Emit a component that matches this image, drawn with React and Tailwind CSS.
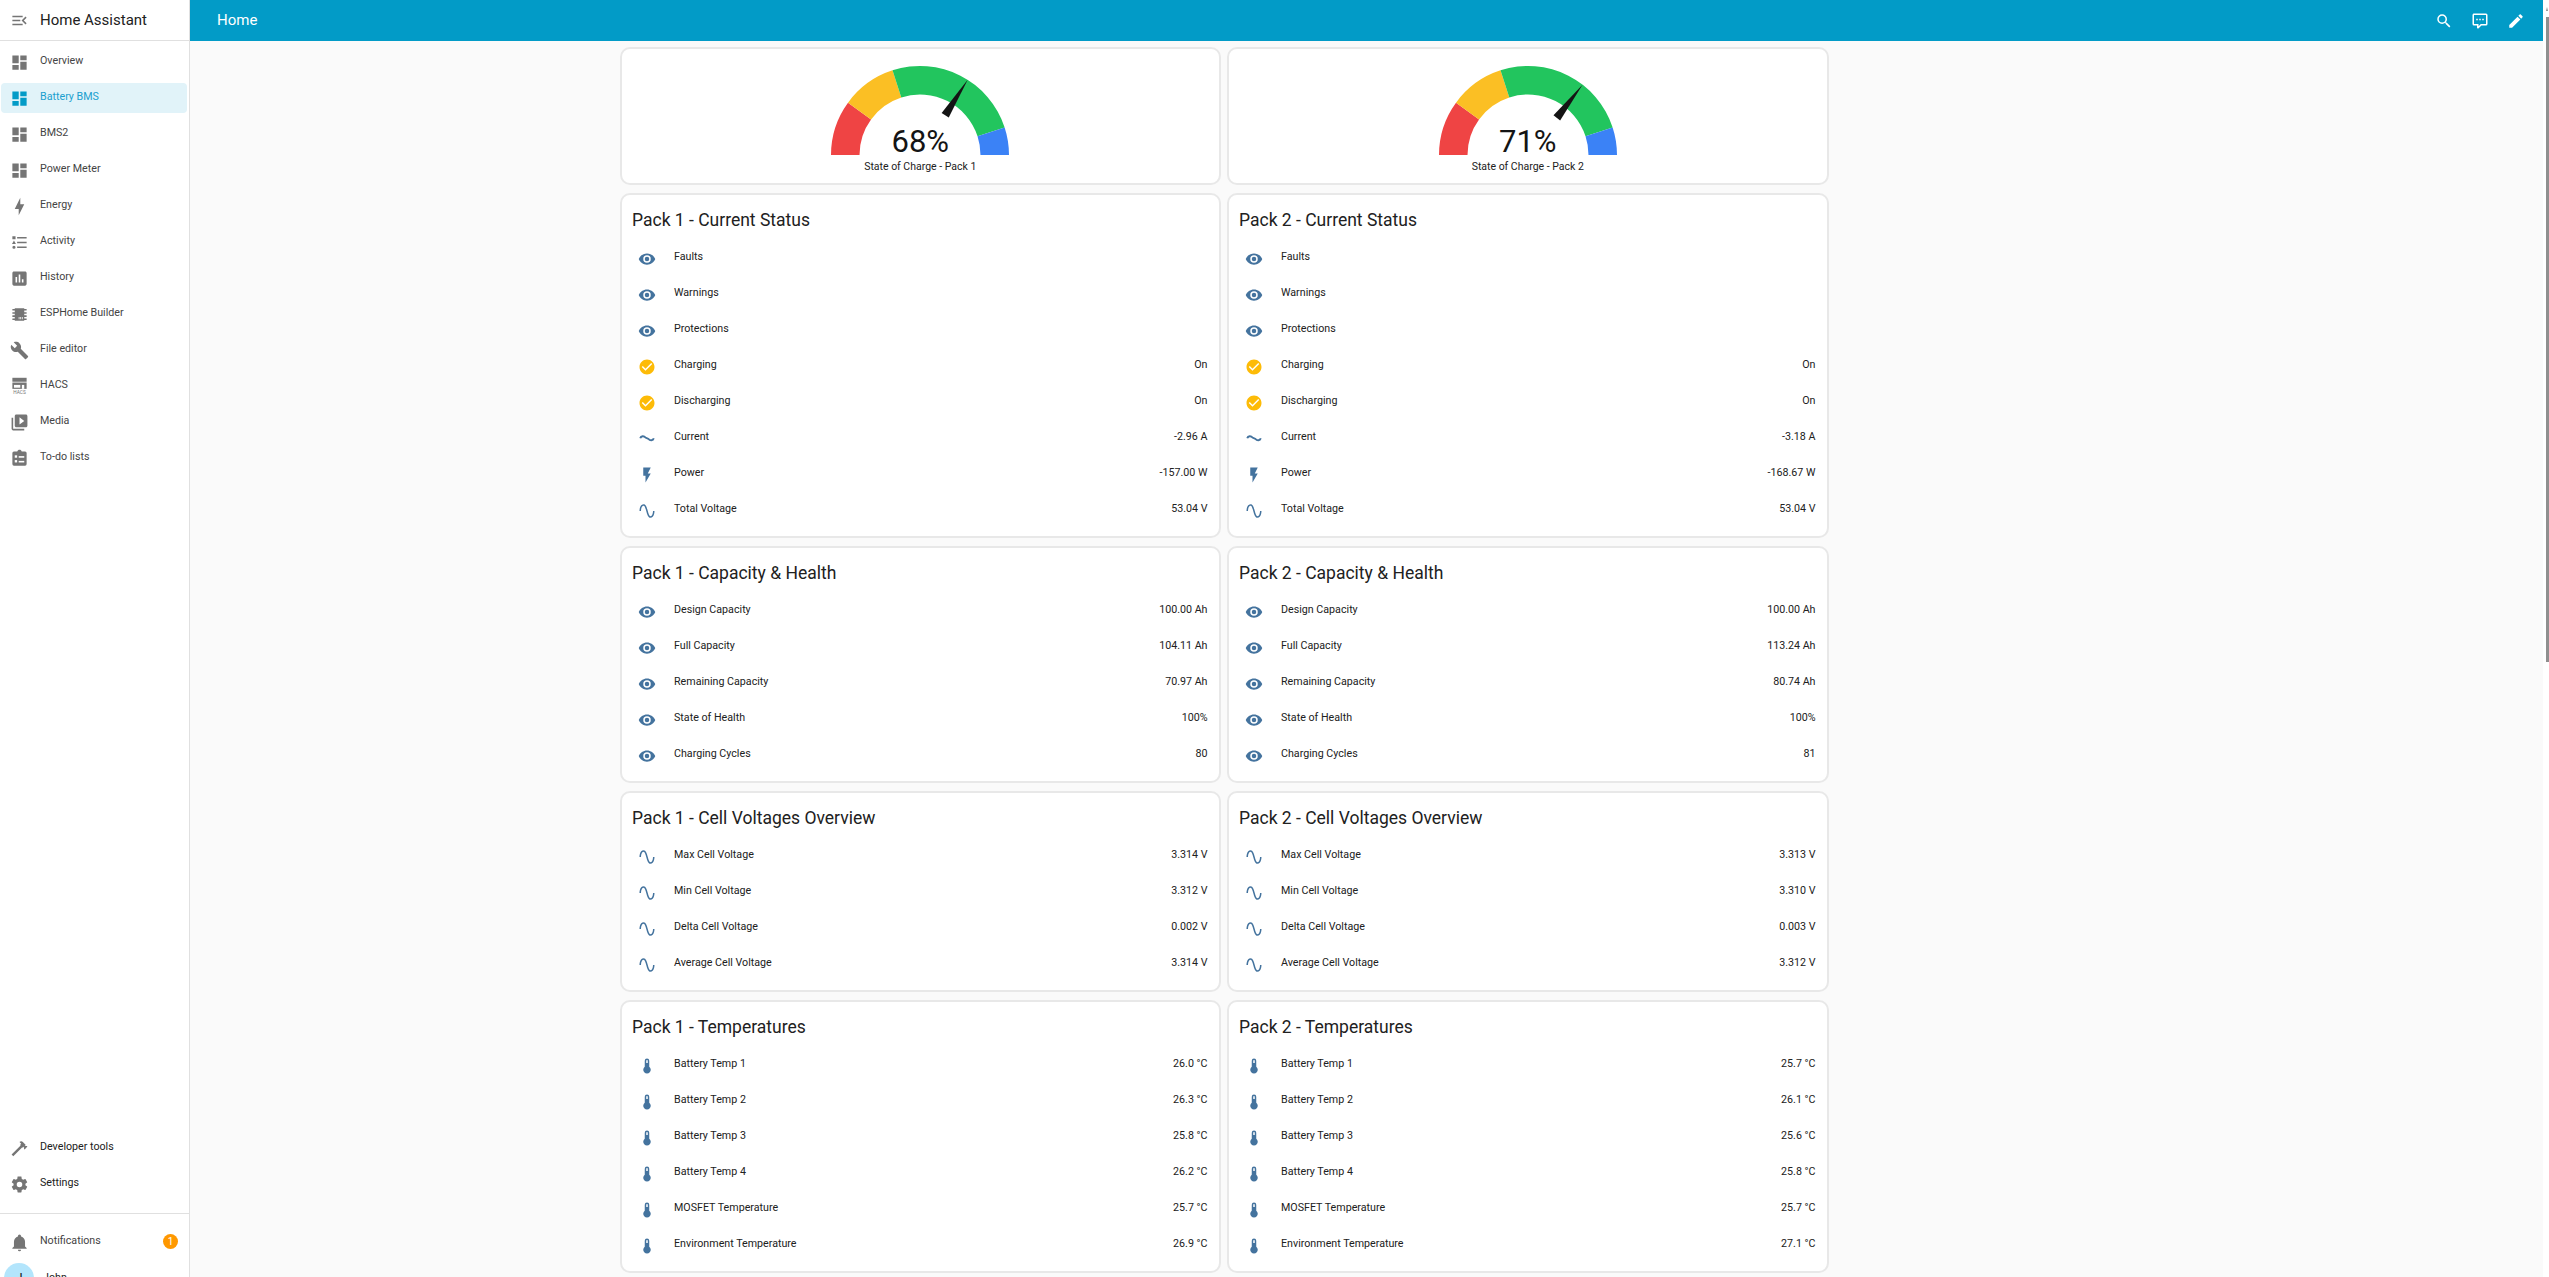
const P = {
  dashboard: 'M13,3V9H21V3M13,21H21V11H13M3,21H11V15H3M3,13H11V3H3V13Z',
  menuOpen: 'M21,15.61L19.59,17L14.58,12L19.59,7L21,8.39L17.44,12L21,15.61M3,6H16V8H3V6M3,13V11H13V13H3M3,18V16H16V18H3Z',
  bolt: 'M11 15H6L13 1V9H18L11 23V15Z',
  list: 'M5,9.5L7.5,14H2.5L5,9.5M3,4H7V8H3V4M5,20A2,2 0 0,0 7,18A2,2 0 0,0 5,16A2,2 0 0,0 3,18A2,2 0 0,0 5,20M9,5V7H21V5H9M9,19H21V17H9V19M9,13H21V11H9V13Z',
  chart: 'M19 3H5C3.9 3 3 3.9 3 5V19C3 20.1 3.9 21 5 21H19C20.1 21 21 20.1 21 19V5C21 3.9 20.1 3 19 3M9 17H7V10H9V17M13 17H11V7H13V17M17 17H15V13H17V17Z',
  chip: 'M6,4H18V5H21V7H18V9H21V11H18V13H21V15H18V17H21V19H18V20H6V19H3V17H6V15H3V13H6V11H3V9H6V7H3V5H6V4M11,15V18H12V15H11M13,15V18H14V15H13M15,15V18H16V15H15Z',
  wrench: 'M22.7,19L13.6,9.9C14.5,7.6 14,4.9 12.1,3C10.1,1 7.1,0.6 4.7,1.7L9,6L6,9L1.6,4.7C0.4,7.1 0.9,10.1 2.9,12.1C4.8,14 7.5,14.5 9.8,13.6L18.9,22.7C19.3,23.1 19.9,23.1 20.3,22.7L22.6,20.4C23.1,20 23.1,19.3 22.7,19Z',
  media: 'M4 6H2V20C2 21.1 2.9 22 4 22H18V20H4V6M20 2H8C6.9 2 6 2.9 6 4V16C6 17.1 6.9 18 8 18H20C21.1 18 22 17.1 22 16V4C22 2.9 21.1 2 20 2M12 14.5V5.5L18 10L12 14.5Z',
  hammer: 'M2 19.63L13.43 8.2L12.72 7.5L14.14 6.07L12 3.89C13.2 2.7 15.09 2.7 16.27 3.89L19.87 7.5L18.45 8.91H21.29L22 9.62L18.45 13.21L17.74 12.5V9.62L16.27 11.04L15.56 10.33L4.13 21.76L2 19.63Z',
  cog: 'M12,15.5A3.5,3.5 0 0,1 8.5,12A3.5,3.5 0 0,1 12,8.5A3.5,3.5 0 0,1 15.5,12A3.5,3.5 0 0,1 12,15.5M19.43,12.97C19.47,12.65 19.5,12.33 19.5,12C19.5,11.67 19.47,11.34 19.43,11L21.54,9.37C21.73,9.22 21.78,8.95 21.66,8.73L19.66,5.27C19.54,5.05 19.27,4.96 19.05,5.05L16.56,6.05C16.04,5.66 15.5,5.32 14.87,5.07L14.5,2.42C14.46,2.18 14.25,2 14,2H10C9.75,2 9.54,2.18 9.5,2.42L9.13,5.07C8.5,5.32 7.96,5.66 7.44,6.05L4.95,5.05C4.73,4.96 4.46,5.05 4.34,5.27L2.34,8.73C2.21,8.95 2.27,9.22 2.46,9.37L4.57,11C4.53,11.34 4.5,11.67 4.5,12C4.5,12.33 4.53,12.65 4.57,12.97L2.46,14.63C2.27,14.78 2.21,15.05 2.34,15.27L4.34,18.73C4.46,18.95 4.73,19.03 4.95,18.95L7.44,17.94C7.96,18.34 8.5,18.68 9.13,18.93L9.5,21.58C9.54,21.82 9.75,22 10,22H14C14.25,22 14.46,21.82 14.5,21.58L14.87,18.93C15.5,18.67 16.04,18.34 16.56,17.94L19.05,18.95C19.27,19.03 19.54,18.95 19.66,18.73L21.66,15.27C21.78,15.05 21.73,14.78 21.54,14.63L19.43,12.97Z',
  bell: 'M21,19V20H3V19L5,17V11C5,7.9 7.03,5.17 10,4.29C10,4.19 10,4.1 10,4A2,2 0 0,1 12,2A2,2 0 0,1 14,4C14,4.1 14,4.19 14,4.29C16.97,5.17 19,7.9 19,11V17L21,19M14,21A2,2 0 0,1 12,23A2,2 0 0,1 10,21',
  search: 'M9.5,3A6.5,6.5 0 0,1 16,9.5C16,11.11 15.41,12.59 14.44,13.73L14.71,14H15.5L20.5,19L19,20.5L14,15.5V14.71L13.73,14.44C12.59,15.41 11.11,16 9.5,16A6.5,6.5 0 0,1 3,9.5A6.5,6.5 0 0,1 9.5,3M9.5,5C7,5 5,7 5,9.5C5,12 7,14 9.5,14C12,14 14,12 14,9.5C14,7 12,5 9.5,5Z',
  comment: 'M9,22A1,1 0 0,1 8,21V18H4A2,2 0 0,1 2,16V4C2,2.89 2.9,2 4,2H20A2,2 0 0,1 22,4V16A2,2 0 0,1 20,18H13.9L10.2,21.71C10,21.9 9.75,22 9.5,22V22H9M10,16V19.08L13.08,16H20V4H4V16H10M17,11V9H15V11H17M13,11V9H11V11H13M9,11V9H7V11H9Z',
  pencil: 'M20.71,7.04C21.1,6.65 21.1,6 20.71,5.63L18.37,3.29C18,2.9 17.35,2.9 16.96,3.29L15.12,5.12L18.87,8.87M3,17.25V21H6.75L17.81,9.93L14.06,6.18L3,17.25Z',
  eye: 'M12,9A3,3 0 0,0 9,12A3,3 0 0,0 12,15A3,3 0 0,0 15,12A3,3 0 0,0 12,9M12,17A5,5 0 0,1 7,12A5,5 0 0,1 12,7A5,5 0 0,1 17,12A5,5 0 0,1 12,17M12,4.5C7,4.5 2.73,7.61 1,12C2.73,16.39 7,19.5 12,19.5C17,19.5 21.27,16.39 23,12C21.27,7.61 17,4.5 12,4.5Z',
  check: 'M12 2C6.5 2 2 6.5 2 12S6.5 22 12 22 22 17.5 22 12 17.5 2 12 2M10 17L5 12L6.41 10.59L10 14.17L17.59 6.58L19 8L10 17Z',
  flash: 'M7,2V13H10V22L17,10H13L17,2H7Z',
  sine: 'M16.5,21C13.5,21 12.31,16.76 11.05,12.28C10.14,9.04 9,5 7.5,5C4.11,5 4,11.93 4,12H2C2,11.63 2.06,3 7.5,3C10.5,3 11.71,7.25 12.97,11.74C13.91,15.08 15,19 16.5,19C19.94,19 20.03,12.07 20,12H22C22,12.37 21.94,21 16.5,21Z',
  thermo: 'M15 13V5A3 3 0 0 0 9 5V13A5 5 0 1 0 15 13M12 4A1 1 0 0 1 13 5V8H11V5A1 1 0 0 1 12 4Z',
  clipboard: 'M19,3H14.82C14.4,1.84 13.3,1 12,1C10.7,1 9.6,1.84 9.18,3H5A2,2 0 0,0 3,5V19A2,2 0 0,0 5,21H19A2,2 0 0,0 21,19V5A2,2 0 0,0 19,3Z',
};

const Icon = ({ d, className = '' }) => (
  <svg viewBox="0 0 24 24" className={`shrink-0 fill-current ${className}`}>
    <path d={d} />
  </svg>
);

// the current-ac glyph: a flattened wave, drawn as a stroke
const CurrentIcon = ({ className = '' }) => (
  <svg viewBox="0 0 24 24" className={`shrink-0 ${className}`} fill="none" stroke="currentColor" strokeWidth="2.6">
    <path d="M3 11C4 7.5 8 7.5 10 10L14 12C16 14.5 20 14.5 21 11" />
  </svg>
);

const HacsIcon = ({ className = '' }) => (
  <svg viewBox="0 0 24 24" className={`shrink-0 ${className}`} fill="currentColor">
    <rect x="3" y="1" width="18" height="5" />
    <rect x="3" y="7" width="18" height="8" />
    <rect x="5" y="10" width="8" height="3.5" fill="#ffffff" />
    <rect x="15" y="10" width="3" height="5" fill="#ffffff" />
    <text x="12" y="22" textAnchor="middle" fontSize="6" fontFamily="Roboto, sans-serif">HACS</text>
  </svg>
);

const TodoIcon = ({ className = '' }) => (
  <svg viewBox="0 0 24 24" className={`shrink-0 ${className}`} fill="currentColor">
    <path d={P.clipboard} />
    <rect x="6" y="8" width="3" height="3" fill="#ffffff" />
    <rect x="11" y="9" width="7" height="2" fill="#ffffff" />
    <rect x="6" y="14" width="3" height="3" fill="#ffffff" />
    <rect x="11" y="15" width="7" height="2" fill="#ffffff" />
  </svg>
);

const NAV = [
  { label: 'Overview', d: P.dashboard },
  { label: 'Battery BMS', d: P.dashboard, active: true },
  { label: 'BMS2', d: P.dashboard },
  { label: 'Power Meter', d: P.dashboard },
  { label: 'Energy', d: P.bolt },
  { label: 'Activity', d: P.list },
  { label: 'History', d: P.chart },
  { label: 'ESPHome Builder', d: P.chip },
  { label: 'File editor', d: P.wrench },
  { label: 'HACS', Custom: HacsIcon },
  { label: 'Media', d: P.media },
  { label: 'To-do lists', Custom: TodoIcon },
];

const NavRow = ({ label, d, Custom, active, dark }) => (
  <div className="h-[36px] pt-[4px] pl-px pr-[2px]">
    <div className={`h-[30px] flex items-center pl-[9px] gap-[11px] rounded-[4px] ${active ? 'bg-[#e1f3f9] text-[#1a9fcf]' : ''}`}>
      {Custom ? (
        <Custom className="w-[19px] h-[19px] text-[#757575]" />
      ) : (
        <Icon d={d} className={`w-[19px] h-[19px] ${active ? 'text-[#039bc7]' : 'text-[#757575]'}`} />
      )}
      <span className={`text-[10.7px] -mt-[1px] ${active ? '' : dark ? 'text-[#212121]' : 'text-[#444444]'}`}>{label}</span>
    </div>
  </div>
);

const Sidebar = () => (
  <aside className="w-[190px] shrink-0 h-full overflow-hidden bg-white border-r-[1.5px] border-[#e0e0e0]">
    <div className="h-[41px] border-b-[1.5px] border-[#e0e0e0] flex items-center pl-[10px] gap-[11px]">
      <Icon d={P.menuOpen} className="w-[19px] h-[19px] text-[#757575]" />
      <span className="text-[15px] text-[#212121]">Home Assistant</span>
    </div>
    <nav className="pt-[2px]">
      {NAV.map((item) => <NavRow key={item.label} {...item} />)}
    </nav>
    <div className="mt-[654px]">
      <NavRow label="Developer tools" d={P.hammer} dark />
      <NavRow label="Settings" d={P.cog} dark />
    </div>
    <div className="mt-[12px] border-t-[1.5px] border-[#e0e0e0] pt-[9px]">
      <div className="relative">
        <NavRow label="Notifications" d={P.bell} />
        <span className="absolute right-[11px] top-[11px] w-[15px] h-[15px] rounded-full bg-[#ff9800] text-white text-[10px] flex items-center justify-center">1</span>
      </div>
      <div className="flex items-center gap-[9px] pl-[4px] mt-[4px]">
        <span className="w-[30px] h-[30px] shrink-0 rounded-full bg-[#b3e5fc] text-[#212121] text-[13px] flex items-center justify-center">J</span>
        <span className="text-[10.7px] text-[#212121]">John</span>
      </div>
    </div>
  </aside>
);

const arc = (from, to, r1 = 89, r2 = 60.5) => {
  const pt = (pct, r) => {
    const a = Math.PI * (1 - pct / 100);
    return `${(r * Math.cos(a)).toFixed(2)} ${(-r * Math.sin(a)).toFixed(2)}`;
  };
  return `M${pt(from, r1)}A${r1} ${r1} 0 0 1 ${pt(to, r1)}L${pt(to, r2)}A${r2} ${r2} 0 0 0 ${pt(from, r2)}Z`;
};

const needle = (pct) => {
  const a = Math.PI * (1 - pct / 100);
  const ux = Math.cos(a), uy = -Math.sin(a);
  const nx = -uy, ny = ux;
  const f = (r, w) => `${(ux * r + nx * w).toFixed(2)} ${(uy * r + ny * w).toFixed(2)}`;
  return `M${f(89, 0)}L${f(47, 4.2)}L${f(47, -4.2)}Z`;
};

const Gauge = ({ value, pack }) => (
  <div className="bg-white border-2 border-[#e8e8e8] rounded-[10px] h-[138px] flex flex-col items-center pt-[16px]">
    <div className="relative w-[180px] h-[90px]">
      <svg viewBox="-90 -90 180 90" className="w-[180px] h-[90px] block">
        <path d={arc(0, 20)} fill="#ef4444" />
        <path d={arc(20, 40)} fill="#fbbf24" />
        <path d={arc(40, 90)} fill="#22c55e" />
        <path d={arc(90, 100)} fill="#3b82f6" />
        <path d={needle(value)} fill="#141414" />
      </svg>
      <span className="absolute inset-x-0 bottom-[-7px] text-center text-[31px] leading-[40px] text-[#141414]">{value}%</span>
    </div>
    <span className="text-[10.5px] leading-[14px] mt-[5px] text-[#212121]">State of Charge - Pack {pack}</span>
  </div>
);

const Row = ({ label, value, icon, on }) => (
  <div className="h-[36px] flex items-center">
    {icon === 'current' ? (
      <CurrentIcon className="ml-[6px] w-[18px] h-[18px] mt-[3px] text-[#44739e]" />
    ) : (
      <Icon d={icon} className={`ml-[6px] w-[18px] h-[18px] mt-[3px] ${on ? 'text-[#fdbb07]' : 'text-[#44739e]'}`} />
    )}
    <span className="ml-[18px] mt-[1px] text-[10.7px] text-[#212121]">{label}</span>
    <span className="ml-auto mt-[1px] text-[10.7px] text-[#212121]">{value}</span>
  </div>
);

const Card = ({ title, rows }) => (
  <div className="bg-white border-2 border-[#e8e8e8] rounded-[10px] pt-[13px] pb-[9px] pl-[10px] pr-[11px]">
    <h2 className="text-[17.5px] leading-[24px] mb-[7px] text-[#212121]">{title}</h2>
    {rows.map((r) => <Row key={r.label} {...r} />)}
  </div>
);

const status = (current, power, voltage) => [
  { label: 'Faults', value: '', icon: P.eye },
  { label: 'Warnings', value: '', icon: P.eye },
  { label: 'Protections', value: '', icon: P.eye },
  { label: 'Charging', value: 'On', icon: P.check, on: true },
  { label: 'Discharging', value: 'On', icon: P.check, on: true },
  { label: 'Current', value: current, icon: 'current' },
  { label: 'Power', value: power, icon: P.flash },
  { label: 'Total Voltage', value: voltage, icon: P.sine },
];

const withIcon = (icon, pairs) => pairs.map(([label, value]) => ({ label, value, icon }));

const PACKS = [
  {
    soc: 68,
    status: status('-2.96 A', '-157.00 W', '53.04 V'),
    capacity: [['Design Capacity', '100.00 Ah'], ['Full Capacity', '104.11 Ah'], ['Remaining Capacity', '70.97 Ah'], ['State of Health', '100%'], ['Charging Cycles', '80']],
    cells: [['Max Cell Voltage', '3.314 V'], ['Min Cell Voltage', '3.312 V'], ['Delta Cell Voltage', '0.002 V'], ['Average Cell Voltage', '3.314 V']],
    temps: [['Battery Temp 1', '26.0 °C'], ['Battery Temp 2', '26.3 °C'], ['Battery Temp 3', '25.8 °C'], ['Battery Temp 4', '26.2 °C'], ['MOSFET Temperature', '25.7 °C'], ['Environment Temperature', '26.9 °C']],
  },
  {
    soc: 71,
    status: status('-3.18 A', '-168.67 W', '53.04 V'),
    capacity: [['Design Capacity', '100.00 Ah'], ['Full Capacity', '113.24 Ah'], ['Remaining Capacity', '80.74 Ah'], ['State of Health', '100%'], ['Charging Cycles', '81']],
    cells: [['Max Cell Voltage', '3.313 V'], ['Min Cell Voltage', '3.310 V'], ['Delta Cell Voltage', '0.003 V'], ['Average Cell Voltage', '3.312 V']],
    temps: [['Battery Temp 1', '25.7 °C'], ['Battery Temp 2', '26.1 °C'], ['Battery Temp 3', '25.6 °C'], ['Battery Temp 4', '25.8 °C'], ['MOSFET Temperature', '25.7 °C'], ['Environment Temperature', '27.1 °C']],
  },
];

export default function App() {
  return (
    <div className="flex w-full h-screen overflow-hidden bg-white font-['Roboto',sans-serif]">
      <Sidebar />
      <main className="flex-1 min-w-0 h-full overflow-hidden bg-[#fafafa]">
        <header className="h-[41px] bg-[#029bc7] text-white flex items-center pl-[27px] pr-[18px]">
          <span className="text-[15px]">Home</span>
          <div className="ml-auto flex items-center gap-[18px]">
            <Icon d={P.search} className="w-[18px] h-[18px]" />
            <Icon d={P.comment} className="w-[18px] h-[18px]" />
            <Icon d={P.pencil} className="w-[18px] h-[18px]" />
          </div>
        </header>
        <div className="ml-[430px] mt-[6px] grid grid-cols-[600.5px_601.5px] gap-x-[6.5px] gap-y-[8px]">
          {PACKS.map((p, i) => <Gauge key={i} value={p.soc} pack={i + 1} />)}
          {PACKS.map((p, i) => <Card key={i} title={`Pack ${i + 1} - Current Status`} rows={p.status} />)}
          {PACKS.map((p, i) => <Card key={i} title={`Pack ${i + 1} - Capacity & Health`} rows={withIcon(P.eye, p.capacity)} />)}
          {PACKS.map((p, i) => <Card key={i} title={`Pack ${i + 1} - Cell Voltages Overview`} rows={withIcon(P.sine, p.cells)} />)}
          {PACKS.map((p, i) => <Card key={i} title={`Pack ${i + 1} - Temperatures`} rows={withIcon(P.thermo, p.temps)} />)}
        </div>
      </main>
      <div className="w-[6px] shrink-0 h-full bg-white pl-[3px]">
        <div className="mt-[7px] w-0 h-0 border-x-[1.5px] border-x-transparent border-b-[4px] border-b-[#8f8f8f]" />
        <div className="mt-[6px] h-[645px] bg-[#8f8f8f]" />
      </div>
    </div>
  );
}
